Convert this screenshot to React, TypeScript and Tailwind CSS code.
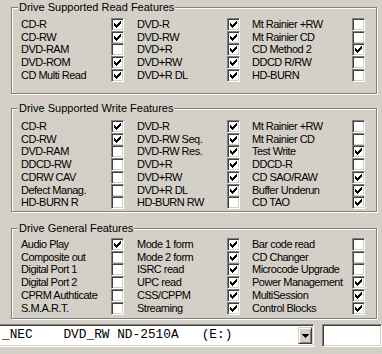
import { ReactNode } from 'react';

type Item = [string, boolean];

const readFeatures: Item[][] = [
  [['CD-R', true], ['CD-RW', true], ['DVD-RAM', false], ['DVD-ROM', true], ['CD Multi Read', true]],
  [['DVD-R', true], ['DVD-RW', true], ['DVD+R', true], ['DVD+RW', true], ['DVD+R DL', true]],
  [['Mt Rainier +RW', false], ['Mt Rainier CD', false], ['CD Method 2', true], ['DDCD R/RW', false], ['HD-BURN', false]],
];

const writeFeatures: Item[][] = [
  [['CD-R', true], ['CD-RW', true], ['DVD-RAM', false], ['DDCD-RW', false], ['CDRW CAV', false], ['Defect Manag.', false], ['HD-BURN R', false]],
  [['DVD-R', true], ['DVD-RW Seq.', true], ['DVD-RW Res.', true], ['DVD+R', true], ['DVD+RW', true], ['DVD+R DL', true], ['HD-BURN RW', false]],
  [['Mt Rainier +RW', false], ['Mt Rainier CD', false], ['Test Write', true], ['DDCD-R', false], ['CD SAO/RAW', true], ['Buffer Underun', true], ['CD TAO', true]],
];

const generalFeatures: Item[][] = [
  [['Audio Play', true], ['Composite out', false], ['Digital Port 1', false], ['Digital Port 2', false], ['CPRM Authticate', false], ['S.M.A.R.T.', false]],
  [['Mode 1 form', true], ['Mode 2 form', true], ['ISRC read', true], ['UPC read', true], ['CSS/CPPM', true], ['Streaming', true]],
  [['Bar code read', false], ['CD Changer', false], ['Microcode Upgrade', false], ['Power Management', true], ['MultiSession', true], ['Control Blocks', true]],
];

// classic win32 check glyph, one 3px column per x
const checkCols: [number, number][] = [[2, 4], [3, 5], [4, 6], [5, 5], [6, 4], [7, 3], [8, 2]];

function CheckBox({ checked }: { checked: boolean }) {
  return (
    <span className="relative block w-[13px] h-[13px] shrink-0 border border-t-[#808080] border-l-[#808080] border-b-white border-r-white bg-white shadow-[inset_1px_1px_0_#404040,inset_-1px_-1px_0_#d4d0c8]">
      {checked && (
        <svg className="absolute left-0 top-0 w-[11px] h-[11px]" viewBox="0 0 11 11" shapeRendering="crispEdges">
          {checkCols.map(([x, y]) => (
            <rect key={x} x={x} y={y} width={1} height={3} fill="#000" />
          ))}
        </svg>
      )}
    </span>
  );
}

function GroupBox({ title, className, children }: { title: string; className: string; children: ReactNode }) {
  return (
    <div className={`relative ml-[11px] w-[366px] border border-[#808080] shadow-[inset_1px_1px_0_#fff,1px_1px_0_#fff] ${className}`}>
      <span className="absolute left-[6px] top-[-8px] px-[1px] bg-[#d4d0c8] leading-[14px] whitespace-nowrap">
        {title}
      </span>
      {children}
    </div>
  );
}

function FeatureGrid({ cols, pad }: { cols: Item[][]; pad: string }) {
  return (
    <div className={`grid grid-cols-[116px_115px_1fr] pl-[9px] ${pad}`}>
      {cols.map((col, ci) => (
        <div key={ci} className="flex flex-col">
          {col.map(([label, on]) => (
            <div key={label} className="flex items-center h-[12.75px]">
              <span className={`${ci === 2 ? 'w-[100px]' : 'w-[90px]'} leading-none tracking-[-0.5px] whitespace-nowrap`}>
                {label}
              </span>
              <CheckBox checked={on} />
            </div>
          ))}
        </div>
      ))}
    </div>
  );
}

export default function App() {
  return (
    <div className="w-[382px] h-[354px] overflow-hidden bg-[#d4d0c8] pt-[7px] text-[11px] text-black font-['Liberation_Sans',Arial,sans-serif]">
      <GroupBox title="Drive Supported Read Features" className="h-[87px]">
        <FeatureGrid cols={readFeatures} pad="pt-[10px]" />
      </GroupBox>

      <GroupBox title="Drive Supported Write Features" className="h-[104px] mt-[14px]">
        <FeatureGrid cols={writeFeatures} pad="pt-[11px]" />
      </GroupBox>

      <GroupBox title="Drive General Features" className="h-[91px] mt-[16px]">
        <FeatureGrid cols={generalFeatures} pad="pt-[9px]" />
      </GroupBox>

      {/* drive selector */}
      <div className="flex mt-[5px]">
        <div className="flex items-center w-[328px] h-[23px] bg-white border border-l-0 border-t-[#808080] border-b-white border-r-white shadow-[inset_0_1px_0_#404040,inset_-1px_-1px_0_#d4d0c8] pl-[2px]">
          <span className="flex-1 whitespace-pre leading-none text-[12.8px] font-['Liberation_Mono','Courier_New',monospace]">
            {'_NEC    DVD_RW ND-2510A   (E:)'}
          </span>
          <div className="flex items-center justify-center w-[14px] h-[17px] mr-[1px] bg-[#d4d0c8] border border-t-[#d4d0c8] border-l-[#d4d0c8] border-b-[#404040] border-r-[#404040] shadow-[inset_1px_1px_0_#fff,inset_-1px_-1px_0_#808080]">
            <svg width="7" height="4" viewBox="0 0 7 4" shapeRendering="crispEdges">
              <rect x="0" y="0" width="7" height="1" fill="#000" />
              <rect x="1" y="1" width="5" height="1" fill="#000" />
              <rect x="2" y="2" width="3" height="1" fill="#000" />
              <rect x="3" y="3" width="1" height="1" fill="#000" />
            </svg>
          </div>
        </div>
        <div className="ml-[8px] w-[60px] h-[23px] shrink-0 bg-white border border-t-[#808080] border-l-[#808080] border-b-white border-r-white shadow-[inset_1px_1px_0_#404040,inset_-1px_-1px_0_#d4d0c8]" />
      </div>
    </div>
  );
}
